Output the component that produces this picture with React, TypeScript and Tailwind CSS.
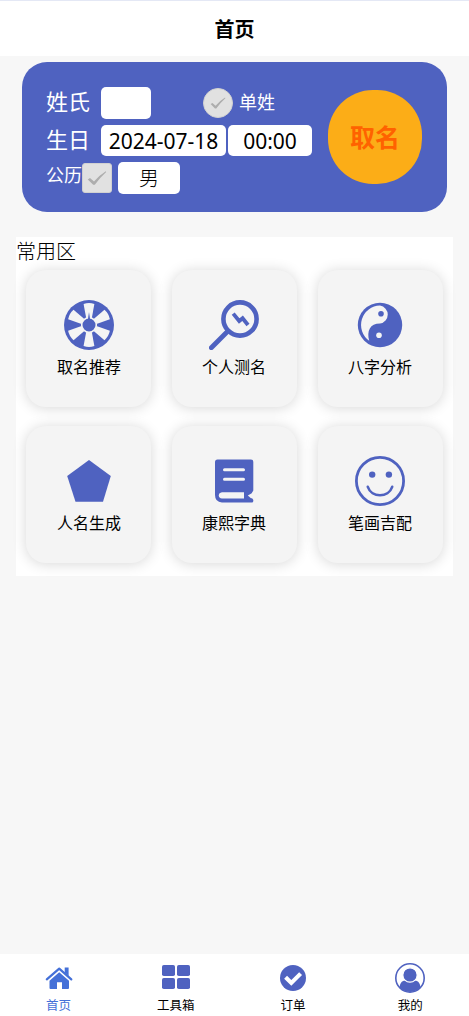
import type { ReactNode } from 'react'

const BLUE = '#4f62c0'

function CheckMark({ size }: { size: number }) {
  return (
    <svg width={size} height={size} viewBox="0 0 20 20" fill="#adadad">
      <path d="M0.8 11.4 L3 9.9 L7 13.4 Q12 7.5 18.8 3.2 L19.2 4 Q12.8 9.8 7.8 16.8 L6.2 16.8 Z" />
    </svg>
  )
}

function WheelIcon() {
  return (
    <svg width="50" height="50" viewBox="0 0 50 50">
      <circle cx="25" cy="25" r="25" fill={BLUE} />
      {[0, 60, 120, 180, 240, 300].map((deg) => (
        <path
          key={deg}
          d="M19.6 4 Q25 2.2 30.4 4 L27.8 18 H22.2 Z"
          fill="#f4f4f4"
          transform={`rotate(${deg} 25 25)`}
        />
      ))}
      <circle cx="25" cy="25" r="7.3" fill={BLUE} stroke="#f4f4f4" strokeWidth="1.6" />
      <path d="M25 12 L26.2 20 H23.8 Z" fill={BLUE} />
    </svg>
  )
}

function SearchIcon() {
  return (
    <svg width="50" height="50" viewBox="0 0 50 50" fill="none" stroke={BLUE}>
      <circle cx="31" cy="19" r="16.6" strokeWidth="4.6" />
      <path d="M19 31 L2.3 47.7" strokeWidth="4.8" strokeLinecap="round" />
      <path d="M24.2 13.6 L30.2 21 L33.6 18.2 L39 25" strokeWidth="3.8" />
    </svg>
  )
}

function TaijiIcon() {
  return (
    <svg width="50" height="50" viewBox="0 0 50 50">
      <circle cx="25" cy="25" r="22.2" fill={BLUE} />
      <path
        d="M25 5.6 A9.1 9.1 0 0 1 25 23.6 C15 23.6 11.5 31 14.2 40.8 A19.4 19.4 0 0 1 25 5.6 Z"
        fill="#f4f4f4"
      />
      <circle cx="26" cy="13.8" r="2.8" fill={BLUE} />
      <circle cx="24" cy="35.2" r="2.8" fill="#f4f4f4" />
    </svg>
  )
}

function PentagonIcon() {
  return (
    <svg width="50" height="50" viewBox="0 0 50 50">
      <path d="M25 4 L46.8 20 L39 45.7 H11.5 L3.2 20 Z" fill={BLUE} />
    </svg>
  )
}

function BookIcon() {
  return (
    <svg width="50" height="50" viewBox="0 0 50 50">
      <path
        d="M8.5 3.5 H42 Q44.3 3.5 44.3 5.8 V34.5 Q40.8 39 44.3 44 V45 Q44.3 46.5 42.8 46.5 H13 Q6 46 6 39 V6 Q6 3.5 8.5 3.5 Z"
        fill={BLUE}
      />
      <path d="M15.5 13.8 H34.5 M15.5 23.3 H34.5" stroke="#f4f4f4" strokeWidth="3" strokeLinecap="round" />
      <path d="M13 36.3 H35 V42.5 H13 Q9.8 42 9.8 39.4 Q9.8 36.8 13 36.3 Z" fill="#f4f4f4" />
      <path d="M45 36 L38.8 39.4 L42 42.3 H45 Z" fill="#f4f4f4" />
    </svg>
  )
}

function SmileIcon() {
  return (
    <svg width="50" height="50" viewBox="0 0 50 50" fill="none" stroke={BLUE}>
      <circle cx="25" cy="25" r="23.6" strokeWidth="2.8" />
      <circle cx="17.2" cy="18.6" r="3.2" fill={BLUE} stroke="none" />
      <circle cx="33.9" cy="18.6" r="3.2" fill={BLUE} stroke="none" />
      <path d="M12.8 30.8 C16.5 42 33.5 42 37.2 30.8" strokeWidth="2.6" strokeLinecap="round" />
    </svg>
  )
}

function HomeIcon() {
  return (
    <svg width="30" height="30" viewBox="0 0 30 30" fill="#4470d8">
      <path d="M2.8 16.4 L15.2 5.6 L27.3 16.4" fill="none" stroke="#4470d8" strokeWidth="2.2" strokeLinecap="round" strokeLinejoin="round" />
      <path d="M20.7 4.6 H24.6 V13 L20.7 9.5 Z" />
      <path d="M15.2 9.3 L25 17.8 V25 Q25 26 24 26 H18 V19.3 H13 V26 H6.5 Q5.5 26 5.5 25 V17.8 Z" />
    </svg>
  )
}

function ToolboxIcon() {
  return (
    <svg width="30" height="30" viewBox="0 0 30 30" fill={BLUE}>
      <rect x="1" y="2" width="13" height="11" rx="1.8" />
      <rect x="16" y="2" width="13" height="11" rx="1.8" />
      <rect x="1" y="15" width="13" height="11" rx="1.8" />
      <rect x="16" y="15" width="13" height="11" rx="1.8" />
    </svg>
  )
}

function OrderIcon() {
  return (
    <svg width="30" height="30" viewBox="0 0 30 30">
      <circle cx="15" cy="15" r="13" fill={BLUE} />
      <path d="M7.6 14.2 L13.3 19.9 L22.6 10.6" fill="none" stroke="#fff" strokeWidth="4.1" />
    </svg>
  )
}

function MineIcon() {
  return (
    <svg width="30" height="30" viewBox="0 0 30 30">
      <circle cx="15" cy="15" r="14.2" fill="#fff" stroke={BLUE} strokeWidth="1.6" />
      <path d="M4.6 24.5 C4.8 20.5 6.5 17.8 10 17.4 H20 C23.5 17.8 25.2 20.5 25.4 24.5 A14.2 14.2 0 0 1 4.6 24.5 Z" fill={BLUE} />
      <circle cx="15" cy="12" r="7.2" fill={BLUE} stroke="#fff" strokeWidth="1.2" />
    </svg>
  )
}

const features: { label: string; icon: ReactNode }[] = [
  { label: '取名推荐', icon: <WheelIcon /> },
  { label: '个人测名', icon: <SearchIcon /> },
  { label: '八字分析', icon: <TaijiIcon /> },
  { label: '人名生成', icon: <PentagonIcon /> },
  { label: '康熙字典', icon: <BookIcon /> },
  { label: '笔画吉配', icon: <SmileIcon /> },
]

const tabs: { label: string; icon: ReactNode; active?: boolean }[] = [
  { label: '首页', icon: <HomeIcon />, active: true },
  { label: '工具箱', icon: <ToolboxIcon /> },
  { label: '订单', icon: <OrderIcon /> },
  { label: '我的', icon: <MineIcon /> },
]

export default function App() {
  return (
    <div className="flex h-[1016px] w-[469px] flex-col overflow-hidden bg-[#f7f7f7] font-['Noto_Sans','Noto_Sans_CJK_SC',sans-serif] text-black">
      <header className="flex h-14 shrink-0 items-center justify-center border-t border-[#e4e8f5] bg-white pt-0.5">
        <h1 className="text-[20px] leading-7 font-bold">首页</h1>
      </header>

      <section className="mx-[22px] mt-1.5 flex h-[150px] shrink-0 rounded-[25px] bg-[#4f62c0] pt-[25px] pl-6 text-white">
        <div className="flex w-[282px] flex-col gap-1.5">
          <div className="flex h-8 items-center">
            <span className="w-[55px] pb-1 text-[22px] leading-8">姓氏</span>
            <div className="h-8 w-[50px] rounded-[5px] bg-white" />
            <div className="ml-[52px] flex size-[30px] items-center justify-center rounded-full border border-[#d1d1d1] bg-[#e1e1e1]">
              <CheckMark size={16} />
            </div>
            <span className="ml-1.5 pb-[3px] text-[18px] leading-8">单姓</span>
          </div>
          <div className="flex h-[31px] items-center">
            <span className="w-[55px] pb-0.5 text-[22px] leading-[31px]">生日</span>
            <div className="h-[31px] w-[125px] rounded-[5px] bg-white text-center text-[21px] leading-8 text-black">
              2024-07-18
            </div>
            <div className="ml-0.5 h-[31px] w-[84px] rounded-[5px] bg-white text-center text-[21px] leading-8 text-black">
              00:00
            </div>
          </div>
          <div className="flex h-8 items-center">
            <span className="w-9 pb-1.5 text-[18px] leading-8">公历</span>
            <div className="flex size-[30px] items-center justify-center rounded-[3px] border border-[#d1d1d1] bg-[#e1e1e1]">
              <CheckMark size={20} />
            </div>
            <div className="ml-1.5 h-8 w-[62px] rounded-[5px] bg-white text-center text-[20px] leading-[34px] font-light text-black">
              男
            </div>
          </div>
        </div>
        <button className="mt-[3px] flex size-[94px] items-center justify-center rounded-[45px] bg-[#fcad17] pt-0.5 text-[25px] font-bold text-[#ff6200]">
          取名
        </button>
      </section>

      <section className="mx-4 mt-[25px] h-[339px] shrink-0 bg-white">
        <h2 className="h-[33px] text-[20px] leading-[30px] font-light">常用区</h2>
        <div className="grid grid-cols-[125px_125px_125px] gap-x-[21px] gap-y-[19px] pl-2.5">
          {features.map((f) => (
            <div
              key={f.label}
              className="flex h-[137px] flex-col items-center rounded-[20px] bg-[#f4f4f4] pt-[30px] pr-px shadow-[0_1px_14px_rgba(0,0,0,0.16)] nth-[3n+1]:pr-0 nth-[3n+1]:pl-px"
            >
              {f.icon}
              <span className="mt-[5px] text-[16px] leading-6">{f.label}</span>
            </div>
          ))}
        </div>
      </section>

      <nav className="mt-auto grid h-[62px] shrink-0 grid-cols-4 bg-white pt-[9px]">
        {tabs.map((t) => (
          <div key={t.label} className="flex flex-col items-center">
            {t.icon}
            <span className={`mt-[3px] text-[12.5px] leading-5 ${t.active ? 'text-[#4470d8]' : 'text-black'}`}>
              {t.label}
            </span>
          </div>
        ))}
      </nav>
    </div>
  )
}
